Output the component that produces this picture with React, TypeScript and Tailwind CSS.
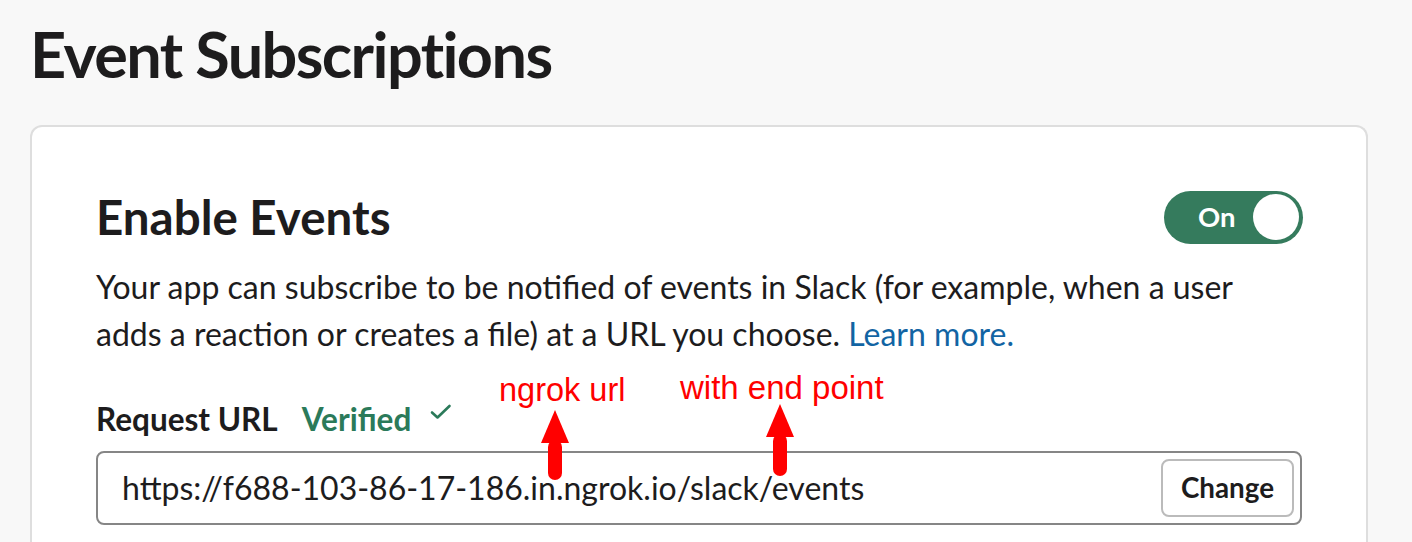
export default function App() {
  return (
    <div className="h-[542px] w-[1412px] overflow-hidden bg-[#f8f8f8] font-['Lato',sans-serif] text-[#1d1c1d]">
      <div className="pl-[30px] pt-[14px]">
        <h1 className="text-[63px] font-bold leading-[80px] tracking-[-1.6px]">Event Subscriptions</h1>
        <div className="relative mt-[31px] w-[1338px] rounded-t-[12px] border-2 border-b-0 border-[#dedede] bg-white px-[64px] pt-[62px] pb-[40px]">
          <div className="flex items-center justify-between">
            <h2 className="text-[47.5px] font-bold leading-[56px]">Enable Events</h2>
            <button className="relative mr-[-1px] flex h-[53px] w-[139px] items-center rounded-full bg-[#357b5d] pl-[34px]">
              <span className="text-[27.5px] font-bold leading-none text-white">On</span>
              <span className="absolute right-[4px] top-[3.5px] h-[46px] w-[46px] rounded-full bg-white" />
            </button>
          </div>
          <p className="mt-[18px] max-w-[1160px] text-[32px] leading-[47px]">
            Your app can subscribe to be notified of events in Slack (for example, when a user adds a reaction or
            creates a file) at a URL you choose. <a className="text-[#1264a3]">Learn more.</a>
          </p>
          <div className="mt-[42px] flex items-center text-[31.5px] leading-[40px]">
            <span className="font-bold">Request URL</span>
            <span className="ml-[24px] font-bold text-[#2b7a5a]">Verified</span>
            <svg className="ml-[19px] mb-[14px]" width="22" height="16" viewBox="0 0 22 16" fill="none">
              <path d="M2 8.5 L7.5 13.5 L19.5 2" stroke="#2b7a5a" strokeWidth="2.6" strokeLinecap="round" strokeLinejoin="round" />
            </svg>
          </div>
          <div className="mt-[12px] flex h-[74px] items-center justify-between rounded-[8px] border-2 border-[#868686] pl-[24px] pr-[6px]">
            <span className="text-[32px]">https://f688-103-86-17-186.in.ngrok.io/slack/events</span>
            <button className="h-[58px] w-[133px] rounded-[8px] border-2 border-[#bbbbbb] bg-white text-[27.8px] font-bold">
              Change
            </button>
          </div>

          <div className="absolute left-[467px] top-[247px] font-['Liberation_Sans',Arial,sans-serif] text-[32.5px] leading-none text-[#ff0000]">
            ngrok url
          </div>
          <div className="absolute left-[648px] top-[244px] font-['Liberation_Sans',Arial,sans-serif] text-[33px] leading-none text-[#ff0000]">
            with end point
          </div>
          <svg className="absolute left-[508px] top-[283px]" width="30" height="72" viewBox="0 0 30 72">
            <polygon points="15,0 29,33 1,33" fill="#ff0000" />
            <rect x="8" y="30" width="14" height="40" rx="7" fill="#ff0000" />
          </svg>
          <svg className="absolute left-[733px] top-[277px]" width="30" height="74" viewBox="0 0 30 74">
            <polygon points="15,0 29,33 1,33" fill="#ff0000" />
            <rect x="8" y="30" width="14" height="42" rx="7" fill="#ff0000" />
          </svg>
        </div>
      </div>
    </div>
  );
}
